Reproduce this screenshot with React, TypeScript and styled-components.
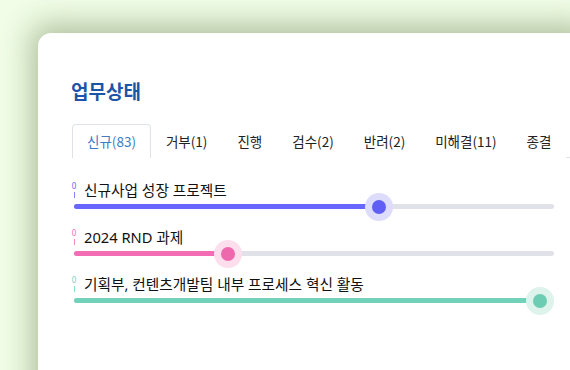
import React from 'react';
import styled, { createGlobalStyle } from 'styled-components';

interface Project {
	label: string;
	value: number;
	color: string;
	thumb: string;
	halo: string;
}

const tabs = ['신규(83)', '거부(1)', '진행', '검수(2)', '반려(2)', '미해결(11)', '종결'];

const projects: Project[] = [
	{ label: '신규사업 성장 프로젝트', value: 63.5, color: '#6767ff', thumb: '#5f5ff6', halo: '#dddcfb' },
	{ label: '2024 RND 과제', value: 32, color: '#f26db4', thumb: '#ee68ad', halo: '#fcdeed' },
	{ label: '기획부, 컨텐츠개발팀 내부 프로세스 혁신 활동', value: 97, color: '#72d2b9', thumb: '#6ccdb2', halo: '#ddf3ec' },
];

const App = (): JSX.Element => {
	return (
		<>
			<GlobalStyle />
			<Page>
				<Card>
					<Title>업무상태</Title>
					<TabList>
						{tabs.map((t, i) => (
							<Tab key={t} $active={i === 0}>
								{t}
							</Tab>
						))}
					</TabList>
					<SliderList>
						{projects.map((p) => (
							<SliderRow key={p.label}>
								<RowHeader>
									<Mark $color={p.color}>
										<MarkLabel>0</MarkLabel>
										<MarkTick />
									</Mark>
									<Label>{p.label}</Label>
								</RowHeader>
								<TrackArea>
									<Rail />
									<Fill style={{ width: `${p.value}%`, background: p.color }} />
									<Thumb
										style={{
											left: `${p.value}%`,
											background: p.thumb,
											boxShadow: `0 0 0 7px ${p.halo}`,
										}}
									/>
								</TrackArea>
							</SliderRow>
						))}
					</SliderList>
				</Card>
			</Page>
		</>
	);
};

export default App;

const GlobalStyle = createGlobalStyle`
	html, body {
		margin: 0;
		padding: 0;
		width: 570px;
		height: 370px;
		overflow: hidden;
		background: #f1fde7;
	}
	body {
		font-family: 'Noto Sans CJK KR', 'Noto Sans', sans-serif;
	}
`;

const Page = styled.div`
	width: 570px;
	height: 370px;
	padding: 33px 0 0 38px;
	box-sizing: border-box;
	overflow: hidden;
`;

const Card = styled.div`
	width: 560px;
	height: 420px;
	box-sizing: border-box;
	padding: 44px 0 0 33px;
	background: #ffffff;
	border-radius: 13px;
	box-shadow: -6px -8px 30px rgba(60, 90, 30, 0.38);
`;

const Title = styled.h1`
	margin: 0;
	font-size: 19px;
	line-height: 28px;
	font-weight: 700;
	color: #1b55a6;
`;

const TabList = styled.div`
	display: flex;
	margin-top: 19px;
	margin-left: 1px;
	border-bottom: 1px solid #dfe3e8;
	white-space: nowrap;
`;

const Tab = styled.div<{ $active?: boolean }>`
	flex: none;
	height: 34px;
	padding: 0 14px 1px;
	display: flex;
	align-items: center;
	font-family: 'Noto Sans CJK KR', sans-serif;
	font-size: 13.5px;
	color: ${(p) => (p.$active ? '#3d7cc8' : '#222222')};
	background: #ffffff;
	border: 1px solid ${(p) => (p.$active ? '#dfe3e8' : 'transparent')};
	border-bottom: none;
	border-radius: 4px 4px 0 0;
	margin-bottom: -1px;
	box-sizing: border-box;
`;

const SliderList = styled.div`
	display: flex;
	flex-direction: column;
	gap: 15px;
	width: 480px;
	margin: 22px 0 0 3px;
`;

const SliderRow = styled.div`
	display: flex;
	flex-direction: column;
`;

const RowHeader = styled.div`
	display: flex;
	align-items: flex-start;
	height: 20px;
`;

const Mark = styled.div<{ $color: string }>`
	display: flex;
	flex-direction: column;
	align-items: center;
	width: 10px;
	margin-left: -5px;
	padding-top: 2px;
	color: ${(p) => p.$color};
`;

const MarkLabel = styled.span`
	font-family: 'Noto Sans', sans-serif;
	font-size: 8px;
	line-height: 7px;
`;

const MarkTick = styled.span`
	width: 1px;
	height: 6px;
	margin-top: 3px;
	background: currentColor;
	opacity: 0.8;
`;

const Label = styled.span`
	padding-left: 5px;
	font-family: 'Noto Sans', 'Noto Sans CJK KR', sans-serif;
	font-size: 14.7px;
	line-height: 20px;
	color: #111111;
`;

const TrackArea = styled.div`
	position: relative;
	height: 12px;
`;

const Rail = styled.div`
	position: absolute;
	left: 0;
	right: 0;
	top: 4px;
	height: 5px;
	border-radius: 3px;
	background: #e1e1ea;
`;

const Fill = styled.div`
	position: absolute;
	left: 0;
	top: 4px;
	height: 5px;
	border-radius: 3px 0 0 3px;
`;

const Thumb = styled.div`
	position: absolute;
	top: 6.5px;
	width: 14px;
	height: 14px;
	border-radius: 50%;
	transform: translate(-50%, -50%);
`;
